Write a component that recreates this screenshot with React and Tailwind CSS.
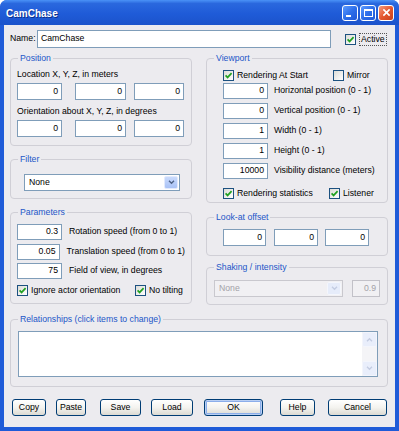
import React from "react"

const Field = ({ value, className = "w-[45px] h-[16px]", disabled }) => (
  <div className={`border flex items-center justify-end pr-[3px] ${disabled ? "border-[#C2C1C8] bg-[#F1F0F3] text-[#A3A2A8]" : "border-[#7F9DB9] bg-white"} ${className}`}>
    { value }
  </div>
)

const Check = ({ checked, label, focus }) => (
  <div className="flex items-center gap-[3px]">
    <span className="w-[11px] h-[11px] border border-[#1C5180] bg-linear-to-br from-[#DCDCD7] to-white flex items-center justify-center shrink-0">
      { !checked ? null :
        <svg viewBox="0 0 9 9" className="w-[9px] h-[9px]">
          <path d="M1.6 4.3 L3.6 6.4 L7.6 2.2" stroke="#21A121" strokeWidth="1.7" fill="none" />
        </svg>
      }
    </span>
    <span className={ focus ? "border border-dotted border-[#555] px-px leading-[11px]" : "leading-[11px]" }>
      { label }
    </span>
  </div>
)

const Chevron = ({ color }) => (
  <svg viewBox="0 0 8 6" className="w-[7px] h-[5px]">
    <path d="M1 1 L4 4 L7 1" stroke={ color } strokeWidth="1.6" fill="none" />
  </svg>
)

const Select = ({ value, className, disabled }) => (
  <div className={`h-[17px] border flex items-center ${disabled ? "border-[#C9C8CE] bg-[#F1F0F3] text-[#A3A2A8]" : "border-[#7F9DB9] bg-white"} ${className}`}>
    <span className="flex-1 pl-[4px]">{ value }</span>
    <span className={`w-[14px] h-[13px] mr-px rounded-[2px] border flex items-center justify-center ${disabled ? "border-[#F4F6FC] bg-[#E6ECFA]" : "border-[#E2EAFD] bg-linear-to-b from-[#C9DAFC] to-[#A9C2F6]"}`}>
      <Chevron color={ disabled ? "#C3CCE2" : "#4D6185" } />
    </span>
  </div>
)

// group box: the caption sits over the top border line
const Group = ({ title, className = "", body = "", children }) => (
  <div className={`relative pt-[5px] ${className}`}>
    <span className="absolute left-[8px] top-0 px-[2px] leading-[10px] bg-[#ECEBEF] text-[#2356C8]">{ title }</span>
    <div className={`border border-[#D0CFD6] rounded-[4px] pt-[4px] ${body}`}>
      { children }
    </div>
  </div>
)

const Button = ({ label, className, primary }) => (
  <div className={`h-[17px] border border-[#003C74] rounded-[3px] bg-linear-to-b from-white via-[#F4F3EF] to-[#DCDAD3] flex items-center justify-center ${primary ? "shadow-[inset_0_0_0_1px_#B9CFF3,inset_0_0_0_2px_#8CAEEA]" : ""} ${className}`}>
    { label }
  </div>
)

const TitleButton = ({ close, children }) => (
  <div className={`w-[16px] h-[16px] rounded-[3px] border border-white flex items-center justify-center ${close ? "bg-linear-to-br from-[#F19A7D] via-[#E5582F] to-[#C9401A]" : "bg-linear-to-br from-[#5D9BFF] via-[#2E6FEA] to-[#2158D8]"}`}>
    { children }
  </div>
)

const App = () => {
  return (
    <div className="w-[399px] h-[431px] flex flex-col bg-[#1F5BD8] rounded-t-[7px] overflow-hidden whitespace-nowrap font-['Liberation_Sans',Arial,sans-serif] text-[8.7px] text-black">
      <div className="h-[25px] shrink-0 flex items-center pl-[6px] pr-[5px] bg-[linear-gradient(180deg,#4A92F7_0%,#2A68DE_14%,#1F5BD8_55%,#1B53CB_100%)]">
        <span className="flex-1 text-white font-bold text-[10px] pt-[1px] [text-shadow:1px_1px_0_#0A2F8C]">CamChase</span>
        <div className="flex gap-[2px]">
          <TitleButton>
            <span className="w-[5px] h-[2px] bg-white mt-[7px] -ml-[3px]" />
          </TitleButton>
          <TitleButton>
            <span className="w-[9px] h-[8px] border border-white border-t-2" />
          </TitleButton>
          <TitleButton close>
            <svg viewBox="0 0 10 10" className="w-[9px] h-[9px]">
              <path d="M1.5 1.5 L8.5 8.5 M8.5 1.5 L1.5 8.5" stroke="white" strokeWidth="1.8" />
            </svg>
          </TitleButton>
        </div>
      </div>

      <div className="flex-1 mx-[4px] mb-[4px] bg-[#ECEBEF] flex flex-col pt-[5px] pl-[6px] pr-[7px]">
        <div className="flex items-center h-[18px]">
          <span className="w-[27px]">Name:</span>
          <div className="w-[294px] h-[18px] border border-[#7F9DB9] bg-white flex items-center pl-[3px]">CamChase</div>
          <div className="ml-[14px]">
            <Check checked label="Active" focus />
          </div>
        </div>

        <div className="flex gap-[14px] mt-[5px]">
          <div className="w-[182px] flex flex-col">
            <Group title="Position" body="px-[6px] pb-[8px]">
              <div className="mt-[6px] leading-[10px]">Location  X, Y, Z,  in meters</div>
              <div className="flex mt-[4px]">
                <Field value="0" className="w-[45px] h-[17px]" />
                <Field value="0" className="w-[51px] h-[17px] ml-[13px]" />
                <Field value="0" className="w-[50px] h-[17px] ml-[8px]" />
              </div>
              <div className="mt-[6px] leading-[10px]">Orientation about X, Y, Z, in degrees</div>
              <div className="flex mt-[4px]">
                <Field value="0" className="w-[45px] h-[17px]" />
                <Field value="0" className="w-[51px] h-[17px] ml-[13px]" />
                <Field value="0" className="w-[50px] h-[17px] ml-[8px]" />
              </div>
            </Group>

            <Group title="Filter" className="mt-[8px]" body="pl-[13px] pb-[7px]">
              <Select value="None" className="w-[156px] mt-[10px]" />
            </Group>

            <Group title="Parameters" className="mt-[8px]" body="px-[6px] pb-[7px]">
              <div className="flex items-center mt-[7px]">
                <Field value="0.3" />
                <span className="ml-[7px]">Rotation speed (from 0 to 1)</span>
              </div>
              <div className="flex items-center mt-[4px]">
                <Field value="0.05" />
                <span className="ml-[7px]">Translation speed (from 0 to 1)</span>
              </div>
              <div className="flex items-center mt-[3px]">
                <Field value="75" />
                <span className="ml-[7px]">Field of view, in degrees</span>
              </div>
              <div className="flex mt-[6px]">
                <div className="w-[118px]"><Check checked label="Ignore actor orientation" /></div>
                <Check checked label="No tilting" />
              </div>
            </Group>
          </div>

          <div className="w-[182px] flex flex-col">
            <Group title="Viewport" body="pl-[16px] pb-[3px]">
              <div className="flex mt-[7px]">
                <div className="w-[110px]"><Check checked label="Rendering At Start" /></div>
                <Check label="Mirror" />
              </div>
              { [
                ["0", "Horizontal position  (0 - 1)"],
                ["0", "Vertical position  (0 - 1)"],
                ["1", "Width  (0 - 1)"],
                ["1", "Height  (0 - 1)"],
                ["10000", "Visibility distance (meters)"]
              ].map(([v, l], i) => (
                <div key={ i } className={`flex items-center ${i === 0 ? "mt-[2px]" : "mt-[4px]"}`}>
                  <Field value={ v } />
                  <span className="ml-[6px]">{ l }</span>
                </div>
              )) }
              <div className="flex mt-[9px]">
                <div className="w-[106px]"><Check checked label="Rendering statistics" /></div>
                <Check checked label="Listener" />
              </div>
            </Group>

            <Group title="Look-at offset" className="mt-[9px]" body="pl-[16px] pb-[9px]">
              <div className="flex mt-[7px]">
                <Field value="0" className="w-[43px] h-[17px]" />
                <Field value="0" className="w-[44px] h-[17px] ml-[8px]" />
                <Field value="0" className="w-[44px] h-[17px] ml-[7px]" />
              </div>
            </Group>

            <Group title="Shaking / intensity" className="mt-[6px]" body="pl-[7px] pb-[7px]">
              <div className="flex mt-[8px]">
                <Select value="None" className="w-[129px]" disabled />
                <Field value="0.9" className="w-[28px] ml-[9px] h-[17px]" disabled />
              </div>
            </Group>
          </div>
        </div>

        <Group title="Relationships (click items to change)" className="mt-[9px]" body="pl-[7px] pr-[9px] pb-[9px]">
          <div className="mt-[7px] h-[46px] border border-[#7F9DB9] bg-white flex justify-end">
            <div className="w-[15px] bg-[#F4F4F7] flex flex-col justify-between">
              <div className="h-[15px] rounded-[2px] border border-[#F3F5FC] bg-[#E9EEFB] flex items-center justify-center rotate-180">
                <Chevron color="#C3CCE2" />
              </div>
              <div className="h-[15px] rounded-[2px] border border-[#F3F5FC] bg-[#E9EEFB] flex items-center justify-center">
                <Chevron color="#C3CCE2" />
              </div>
            </div>
          </div>
        </Group>

        <div className="flex mt-[12px] pl-[2px]">
          <Button label="Copy" className="w-[34px]" />
          <Button label="Paste" className="w-[30px] ml-[10px]" />
          <Button label="Save" className="w-[41px] ml-[14px]" />
          <Button label="Load" className="w-[42px] ml-[10px]" />
          <Button label="OK" className="w-[59px] ml-[11px]" primary />
          <Button label="Help" className="w-[35px] ml-[17px]" />
          <Button label="Cancel" className="w-[59px] ml-[13px]" />
        </div>
      </div>
    </div>
  )
}

export default App
